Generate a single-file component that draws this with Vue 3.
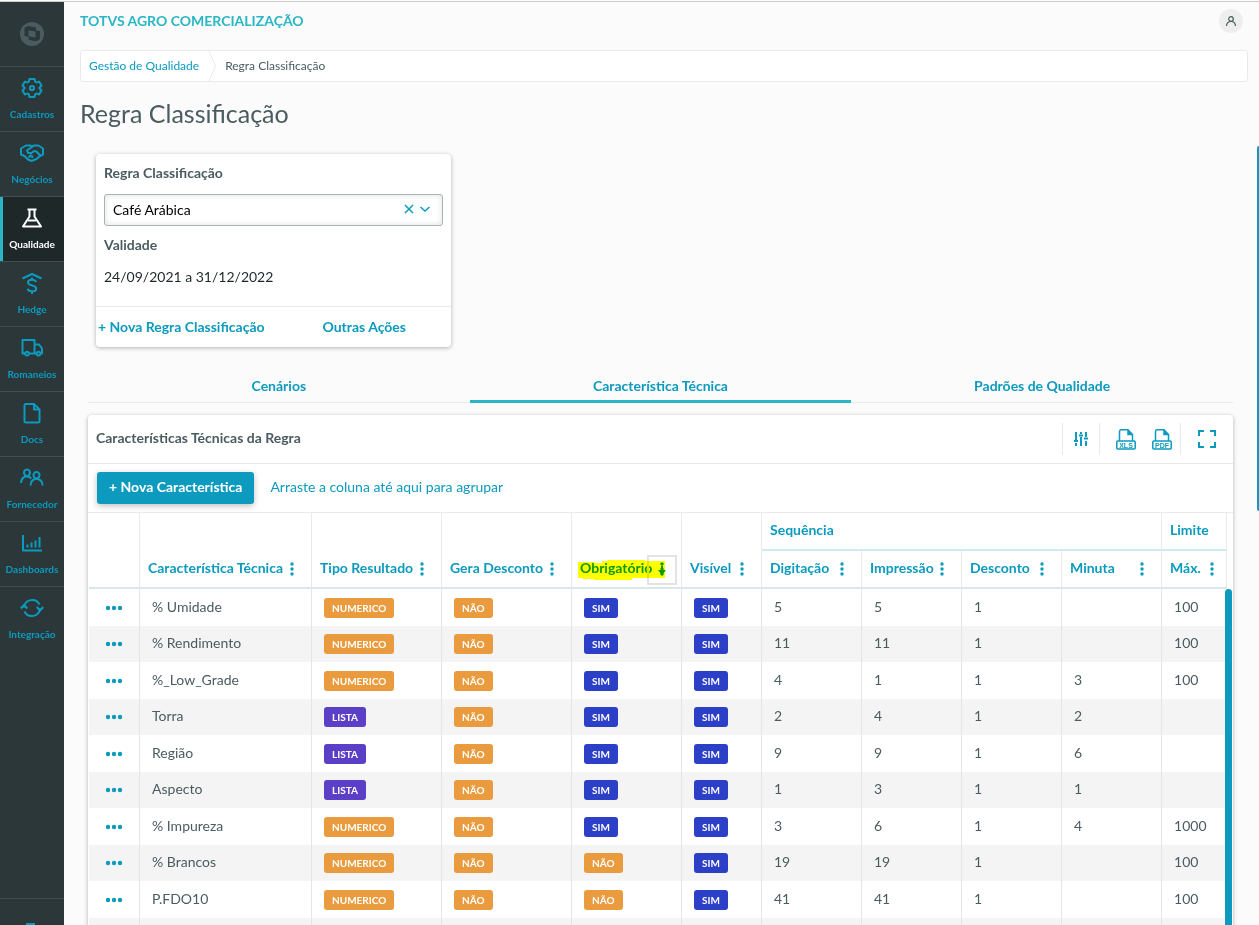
<script setup>
import { ref } from 'vue'

const regra = ref('Café Arábica')

const menu = [
  { label: 'Cadastros', icon: 'gear' },
  { label: 'Negócios', icon: 'hands' },
  { label: 'Qualidade', icon: 'flask', active: true },
  { label: 'Hedge', icon: 'hedge' },
  { label: 'Romaneios', icon: 'truck' },
  { label: 'Docs', icon: 'doc' },
  { label: 'Fornecedor', icon: 'people' },
  { label: 'Dashboards', icon: 'chart' },
  { label: 'Integração', icon: 'sync' }
]

const icons = {
  gear: ['M9.500 3h5l.600 2.600 1.400.800 2.600-.800 2.400 4.200-2 1.800v.800l2 1.800-2.400 4.200-2.600-.800-1.400.800-.600 2.600h-5l-.600-2.600-1.400-.800-2.600.800-2.400-4.200 2-1.800v-.800l-2-1.800 2.400-4.200 2.600.800 1.400-.800z', 'M12 9.900a2.100 2.100 0 1 1 0 4.200a2.100 2.100 0 1 1 0-4.200z'],
  hands: ['M1 7.500L6 4.500h4.500l1.500 1 2-1h4.500L23 7.500v6l-3 1.500-3.500 3-5 2-3.500-1.500-3.500-3.500L1 13.500z', 'M12.500 5.500L7 9.500l1 2.500h3.500l2.500-2 2.500.500 4 4.500', 'M8.500 16.500l2-2 1.500.500.500 2'],
  flask: ['M7.500 3.500h9', 'M9.500 3.500v7L3 20.500h18l-6.500-10v-7', 'M8 14.500h8'],
  hedge: ['M2.500 7.500L12 3l9.500 4.500', 'M16 11c-.500-1.600-2-2.200-4-2.200-2.400 0-4 1-4 2.700s1.500 2.300 4 2.900 4.200 1.200 4.200 3-1.700 2.900-4.200 2.900-4-.900-4.400-2.500', 'M12 6.500v2.500', 'M12 20v3'],
  truck: ['M5 17.500H2.500V4h12v13.500H9', 'M14.500 8.500h4.500l3 4v5h-1.500', 'M16.500 17.500h-2', 'M7 15.700a1.900 1.900 0 1 1 0 3.800a1.900 1.900 0 1 1 0-3.800z', 'M18.500 15.700a1.900 1.900 0 1 1 0 3.800a1.900 1.900 0 1 1 0-3.800z'],
  doc: ['M6 3h8l5.500 5.500V20a1.500 1.500 0 0 1-1.500 1.500H6A1.500 1.500 0 0 1 4.500 20V4.500A1.500 1.500 0 0 1 6 3z', 'M14 3.500v5h5'],
  people: ['M7 3.500a3 3.200 0 1 1 0 6.400a3 3.200 0 1 1 0-6.400z', 'M1 17c.300-4 2.600-6.500 6-6.500 1.800 0 3.200.800 4.200 2', 'M16.500 6a3 3.200 0 1 1 0 6.400a3 3.200 0 1 1 0-6.400z', 'M10.500 19.500c.300-4.200 2.600-6.500 6-6.500s5.800 2.300 6.200 6.500'],
  chart: ['M3 4v15.500h19', 'M7.500 16.500v-3', 'M11.500 16.500v-5', 'M15.500 16.500v-7', 'M19.500 16.500V6'],
  sync: ['M4 11.500a8.200 8.200 0 0 1 15.500-3', 'M20 12.500a8.200 8.200 0 0 1-15.500 3', 'M.800 12.500l3.200-3.500 3.200 3.500', 'M16.800 11l3.200 3.500 3.200-3.500']
}

const tabs = [
  { label: 'Cenários' },
  { label: 'Característica Técnica', active: true },
  { label: 'Padrões de Qualidade' }
]

const columns = ['Característica Técnica', 'Tipo Resultado', 'Gera Desconto', 'Obrigatório', 'Visível']
const subColumns = ['Digitação', 'Impressão', 'Desconto', 'Minuta', 'Máx.']

const rows = [
  ['% Umidade', 'NUMERICO', 'NÃO', 'SIM', 'SIM', '5', '5', '1', '', '100'],
  ['% Rendimento', 'NUMERICO', 'NÃO', 'SIM', 'SIM', '11', '11', '1', '', '100'],
  ['%_Low_Grade', 'NUMERICO', 'NÃO', 'SIM', 'SIM', '4', '1', '1', '3', '100'],
  ['Torra', 'LISTA', 'NÃO', 'SIM', 'SIM', '2', '4', '1', '2', ''],
  ['Região', 'LISTA', 'NÃO', 'SIM', 'SIM', '9', '9', '1', '6', ''],
  ['Aspecto', 'LISTA', 'NÃO', 'SIM', 'SIM', '1', '3', '1', '1', ''],
  ['% Impureza', 'NUMERICO', 'NÃO', 'SIM', 'SIM', '3', '6', '1', '4', '1000'],
  ['% Brancos', 'NUMERICO', 'NÃO', 'NÃO', 'SIM', '19', '19', '1', '', '100'],
  ['P.FDO10', 'NUMERICO', 'NÃO', 'NÃO', 'SIM', '41', '41', '1', '', '100'],
  ['', '', '', '', '', '', '', '', '', '']
]

const badgeClass = { NUMERICO: 'orange', 'NÃO': 'orange', SIM: 'blue', LISTA: 'purple' }
</script>

<template>
  <div class="shell">
    <aside class="sidebar">
      <div class="logo">
        <svg width="24" height="24" viewBox="0 0 24 24" aria-hidden="true">
          <circle cx="12" cy="12" r="12" fill="#4b5c60" />
          <path d="M4.500 5.500l4-1.500 7.500 1.500v3l4 .800v8l-4 2-7.500-1.500v-3l-4-.800z" fill="#2c3739" />
          <path d="M8.500 8.300l7 1.200v6l-7-1.200z" fill="#4b5c60" />
        </svg>
      </div>
      <nav>
        <a v-for="m in menu" :key="m.label" href="#" class="item" :class="{ active: m.active }">
          <svg width="24" height="24" viewBox="0 0 24 24" aria-hidden="true">
            <path v-for="d in icons[m.icon]" :key="d" :d="d" fill="none" stroke="currentColor" stroke-width="2" stroke-linejoin="round" />
          </svg>
          <span>{{ m.label }}</span>
        </a>
      </nav>
      <a href="#" class="foot" aria-label="Menu">
        <svg width="24" height="24" viewBox="0 0 24 24" aria-hidden="true"><path d="M6 0h9v12H6z" fill="currentColor" /></svg>
      </a>
    </aside>

    <main class="main">
      <header class="topbar">
        <span class="brand">TOTVS AGRO COMERCIALIZAÇÃO</span>
        <button class="avatar" aria-label="Usuário">
          <svg width="12" height="12" viewBox="0 0 12 12" fill="none" stroke="#4a5c60" stroke-width="1.200" aria-hidden="true">
            <circle cx="6" cy="4" r="2.300" /><path d="M1.500 11c.200-2.800 1.800-4.500 4.500-4.500s4.300 1.700 4.500 4.500" />
          </svg>
        </button>
      </header>

      <nav class="crumbs" aria-label="Navegação">
        <a href="#">Gestão de Qualidade</a>
        <svg width="8" height="32" viewBox="0 0 8 32" aria-hidden="true"><path d="M.500 0l7 16-7 16" fill="none" stroke="#eaeaea" /></svg>
        <span>Regra Classificação</span>
      </nav>

      <h1>Regra Classificação</h1>

      <section class="filter">
        <div class="filter-body">
          <label for="regra">Regra Classificação</label>
          <div class="combo">
            <select id="regra" v-model="regra"><option>Café Arábica</option></select>
            <button class="clear" aria-label="Limpar">
              <svg width="10" height="10" viewBox="0 0 10 10" aria-hidden="true"><path d="M1 1l8 8M9 1l-8 8" stroke="currentColor" stroke-width="1.500" /></svg>
            </button>
            <svg class="chev" width="10" height="10" viewBox="0 0 10 10" aria-hidden="true"><path d="M.500 3L5 7l4.500-4" fill="none" stroke="currentColor" stroke-width="1.500" /></svg>
          </div>
          <strong>Validade</strong>
          <p>24/09/2021 a 31/12/2022</p>
        </div>
        <footer>
          <button>+ Nova Regra Classificação</button>
          <button>Outras Ações</button>
        </footer>
      </section>

      <div class="tabs" role="tablist">
        <button v-for="t in tabs" :key="t.label" role="tab" :class="{ active: t.active }">{{ t.label }}</button>
      </div>

      <section class="grid-card">
        <header class="card-head">
          <h2>Características Técnicas da Regra</h2>
          <div class="tools">
            <button class="tool sliders" aria-label="Configurar colunas">
              <svg width="16" height="16" viewBox="0 0 16 16" fill="none" stroke="currentColor" stroke-width="2" aria-hidden="true">
                <path d="M3 1v8M3 12v3M8 1v2M8 6v9M13 1v5M13 10v5" /><path d="M1 10h4M6 4.500h4M11 7.500h4" />
              </svg>
            </button>
            <div class="exports">
              <button v-for="f in ['XLS', 'PDF']" :key="f" class="tool" :aria-label="'Exportar ' + f">
                <svg width="20" height="21" viewBox="0 0 20 21" fill="none" stroke="currentColor" stroke-width="1.500" aria-hidden="true">
                  <path d="M3.500 12V2.500A1.800 1.800 0 0 1 5.300.800H12l4.500 4.700V12" /><path d="M12 1v4.500h4.500" fill="currentColor" />
                  <rect x=".800" y="12" width="18.400" height="8" rx="1" />
                  <text x="10" y="18.500" text-anchor="middle" class="fmt">{{ f }}</text>
                </svg>
              </button>
            </div>
            <button class="tool expand" aria-label="Tela cheia">
              <svg width="18" height="18" viewBox="0 0 18 18" fill="none" stroke="currentColor" stroke-width="2" aria-hidden="true">
                <path d="M1 6V1h5M12 1h5v5M17 12v5h-5M6 17H1v-5" />
              </svg>
            </button>
          </div>
        </header>

        <div class="toolbar">
          <button class="primary">+ Nova Característica</button>
          <span>Arraste a coluna até aqui para agrupar</span>
        </div>

        <div class="table-wrap">
          <table>
            <colgroup>
              <col class="c-act"><col class="c-name"><col class="c-mid"><col class="c-mid"><col class="c-obr"><col class="c-vis">
              <col class="c-num"><col class="c-num"><col class="c-num"><col class="c-num"><col>
            </colgroup>
            <thead>
              <tr>
                <th rowspan="2" class="tall"></th>
                <th v-for="c in columns" :key="c" rowspan="2" class="tall">
                  <div class="th">
                    <span>{{ c }}</span>
                    <button class="kebab" :class="{ sorted: c === 'Obrigatório' }" :aria-label="'Opções ' + c">
                      <svg width="12" height="14" viewBox="0 0 12 14" fill="currentColor" aria-hidden="true">
                        <circle cx="6" cy="2" r="1.700" /><circle cx="6" cy="7" r="1.700" /><circle cx="6" cy="12" r="1.700" />
                        <path v-if="c === 'Obrigatório'" d="M5 4h2v4h3l-4 5-4-5h3z" />
                      </svg>
                    </button>
                    <svg v-if="c === 'Obrigatório'" class="marker" width="88" height="20" viewBox="0 0 88 20" aria-hidden="true">
                      <path d="M0 2h17v1h7V1h6V0h37v1h20v17H54v2H16v-1H5v-1H0z" fill="#ff0" />
                    </svg>
                  </div>
                </th>
                <th colspan="4" class="group">Sequência</th>
                <th class="group">Limite</th>
              </tr>
              <tr>
                <th v-for="(c, i) in subColumns" :key="c" class="sub" :class="{ last: i === 4 }">
                  <div class="th">
                    <span>{{ c }}</span>
                    <button class="kebab" :aria-label="'Opções ' + c">
                      <svg width="12" height="14" viewBox="0 0 12 14" fill="currentColor" aria-hidden="true">
                        <circle cx="6" cy="2" r="1.700" /><circle cx="6" cy="7" r="1.700" /><circle cx="6" cy="12" r="1.700" />
                      </svg>
                    </button>
                  </div>
                </th>
              </tr>
            </thead>
            <tbody>
              <tr v-for="(r, ri) in rows" :key="ri">
                <td class="act">
                  <button v-if="r[0]" :aria-label="'Ações ' + r[0]">
                    <svg width="18" height="6" viewBox="0 0 18 6" fill="currentColor" aria-hidden="true">
                      <circle cx="3" cy="3" r="2.200" /><circle cx="9" cy="3" r="2.200" /><circle cx="15" cy="3" r="2.200" />
                    </svg>
                  </button>
                </td>
                <td v-for="(v, ci) in r" :key="ci" :class="{ txt: !badgeClass[v] }">
                  <span v-if="badgeClass[v]" class="badge" :class="badgeClass[v]">{{ v }}</span>
                  <template v-else>{{ v }}</template>
                </td>
              </tr>
            </tbody>
          </table>
          <div class="thumb"></div>
        </div>
      </section>
    </main>
    <div class="page-thumb"></div>
  </div>
</template>

<style>
body { background: #fbfbfb; overflow: hidden; }
</style>

<style scoped>
*, *::after { box-sizing: border-box; }
.shell {
  height: 100vh; padding-top: 2px; display: flex; position: relative; overflow: hidden;
  font-family: Lato, "Noto Sans", sans-serif; font-size: 14px; line-height: 20px; color: #4a5c60;
  background: #fbfbfb;
}
.shell::before { content: ""; position: absolute; top: 1px; left: 0; right: 0; height: 1px; background: #c9cccc; }
button { font: inherit; color: inherit; background: none; border: 0; padding: 0; margin: 0; cursor: pointer; }
a { text-decoration: none; color: #0c9abe; }
svg { display: block; flex: none; }

.sidebar { width: 64px; flex: none; background: #2c3739; display: flex; flex-direction: column; }
.logo { height: 64px; display: flex; align-items: center; justify-content: center; }
.sidebar nav { flex: 1; min-height: 0; overflow: hidden; }
.item {
  height: 65px; border-top: 1px solid #414c4e; padding-top: 9px; display: flex; flex-direction: column;
  align-items: center; gap: 6px; font-size: 10px; line-height: 16px; font-weight: 700;
}
.item.active { background: #1f2829; color: #fff; box-shadow: inset 3px 0 #29b6c5; }
.foot { height: 27px; padding: 24px 0 0 20px; border-top: 1px solid #414c4e; overflow: hidden; }

.main { flex: 1; min-width: 0; padding: 0 11px 0 16px; overflow: hidden; }
.topbar { height: 48px; display: flex; justify-content: space-between; align-items: flex-start; padding: 7px 5px 0 0; }
.brand { color: #29b6c5; font-weight: 700; line-height: 24px; }
.avatar { width: 24px; height: 24px; border-radius: 12px; background: #eee; display: flex; align-items: center; justify-content: center; }
.crumbs {
  height: 32px; background: #fff; border: 1px solid #eaeaea; border-radius: 3px; display: flex; align-items: center;
  padding-left: 8px; font-size: 12px; gap: 9px; overflow: hidden;
}
h1 { margin: 15px 0 0; font-size: 25px; line-height: 32px; font-weight: 400; }

.filter { width: 355px; margin: 25px 0 0 16px; background: #fff; border-radius: 4px; box-shadow: 0 1px 4px rgba(0, 0, 0, .3); }
.filter-body { padding: 9px 8px 0; height: 153px; border-bottom: 1px solid #eaeaea; }
.filter label, .filter strong { display: block; font-weight: 700; }
.combo { position: relative; margin: 11px 0 9px; }
select {
  width: 100%; height: 32px; border: 1px solid #a9b1b3; border-radius: 3px; appearance: none; background: #fff;
  box-shadow: inset 0 0 6px rgba(0, 0, 0, .12); font: inherit; color: #000; padding: 0 60px 0 8px;
}
.clear, .chev { position: absolute; top: 10px; color: #0c9abe; }
.clear { right: 29px; }
.chev { right: 13px; }
.filter p { margin: 12px 0 0; color: #1f2829; }
.filter footer { height: 40px; display: flex; align-items: center; padding: 0 45px 0 2px; justify-content: space-between; color: #0c9abe; }
.filter footer button { font-weight: 700; }

.tabs { display: grid; grid-template-columns: repeat(3, 1fr); margin: 23px 15px 0 8px; border-bottom: 1px solid #eaeaea; }
.tabs button { height: 33px; font-weight: 700; color: #0c9abe; border-bottom: 3px solid transparent; margin-bottom: -1px; padding-top: 2px; }
.tabs button.active { border-color: #29b6c5; }

.grid-card { margin: 12px 15px 0 8px; background: #fff; border-radius: 4px; box-shadow: 0 1px 4px rgba(0, 0, 0, .3); }
.card-head { height: 48px; display: flex; justify-content: space-between; align-items: center; padding-left: 8px; }
h2 { margin: 0; padding-bottom: 2px; font-size: 14px; line-height: 20px; font-weight: 700; }
.tools { display: flex; height: 32px; color: #0c9abe; }
.tool { display: flex; align-items: center; justify-content: center; }
.sliders { width: 37px; border-left: 1px solid #eaeaea; }
.exports { display: flex; gap: 16px; padding: 0 8px 0 16px; border: solid #eaeaea; border-width: 0 1px; }
.expand { width: 52px; }
.fmt { font: 700 7px "Liberation Sans", sans-serif; fill: #0c9abe; stroke: none; }

.toolbar { height: 49px; border-top: 1px solid #eaeaea; display: flex; align-items: center; gap: 16px; padding-left: 9px; color: #0c9abe; }
.toolbar span { padding-bottom: 2px; }
.primary { height: 32px; padding: 0 12px 2px; background: #0c9abe; color: #fff; font-weight: 700; border-radius: 3px; box-shadow: 0 2px 6px rgba(0, 0, 0, .25); }

.table-wrap { position: relative; padding: 0 6px 0 1px; border-top: 1px solid #eaeaea; }
table { width: 100%; table-layout: fixed; border-collapse: separate; border-spacing: 0; }
.c-act { width: 51px; }
.c-name { width: 172px; }
.c-mid { width: 130px; }
.c-obr { width: 110px; }
.c-vis { width: 80px; }
.c-num { width: 100px; }
th { padding: 0; text-align: left; font-weight: 700; color: #0c9abe; border-right: 1px solid #eaeaea; white-space: nowrap; }
.group { height: 38px; border-bottom: 2px solid #cfeaf2; padding: 0 0 2px 8px; }
.sub, .tall { border-bottom: 2px solid #d9e7ea; vertical-align: bottom; }
.sub { height: 38px; }
.th { position: relative; height: 36px; display: flex; align-items: center; justify-content: space-between; padding: 0 13px 0 8px; }
.th span { padding-bottom: 2px; }
.last .th { padding-right: 8px; }
.kebab { position: relative; width: 12px; flex: none; }
.kebab.sorted::after { content: ""; position: absolute; left: -9px; top: -7px; width: 30px; height: 30px; border: 2px solid #e3e3e3; }
.marker { position: absolute; left: 6px; top: 9px; mix-blend-mode: multiply; pointer-events: none; }
td { height: 36px; padding: 0 0 0 12px; border-right: 1px solid #e5e5e5; white-space: nowrap; }
td.txt { padding-bottom: 2px; }
tbody tr:nth-child(odd) td { height: 37px; }
tbody tr:nth-child(even) { background: #f4f4f4; }
td.act { padding: 0; color: #0c9abe; }
.act button { display: block; margin: 0 auto; }
.badge { display: block; width: fit-content; height: 20px; padding: 0 8px; border-radius: 3px; color: #fff; font-size: 10px; font-weight: 700; line-height: 20px; }
.orange { background: #ea9b3e; }
.blue { background: #2c3fc7; }
.purple { background: #5b40c7; }
.thumb { position: absolute; right: 1px; top: 76px; bottom: 0; width: 7px; background: #0c9abe; border-radius: 4px; }
.page-thumb { position: absolute; right: 0; top: 146px; width: 2px; height: 365px; background: #0c9abe; border-radius: 2px 0 0 2px; }
</style>
